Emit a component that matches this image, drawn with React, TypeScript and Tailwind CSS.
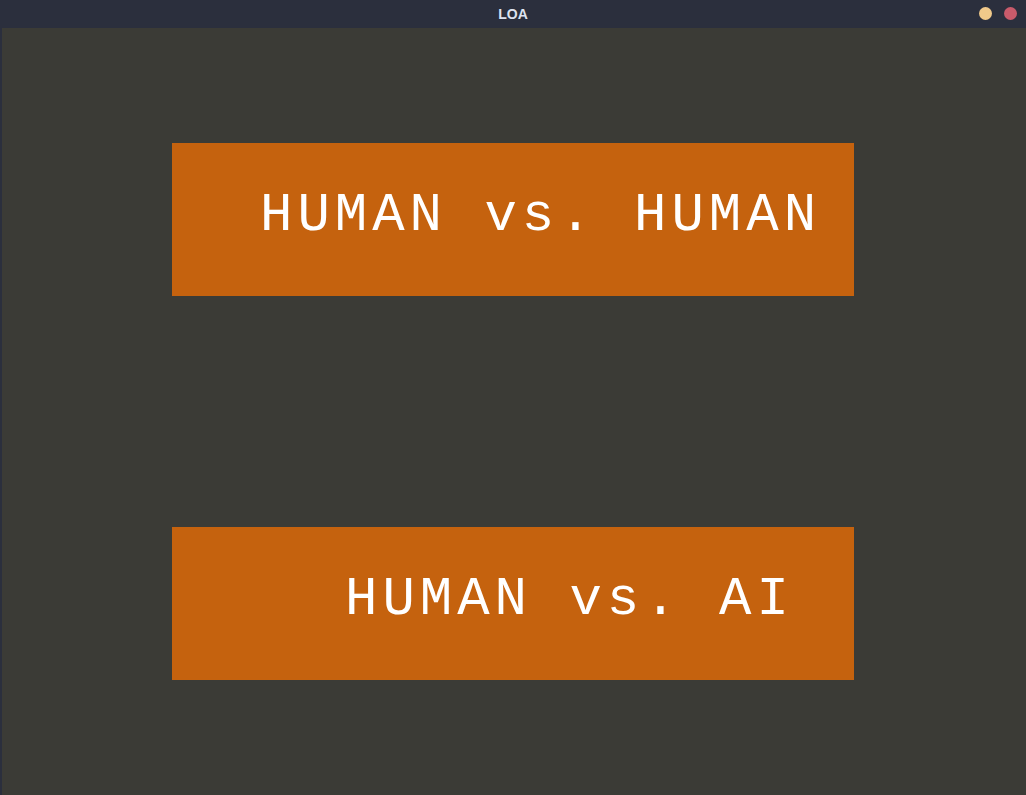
import React from "react";

export default function App() {
  return (
    <div className="w-[1026px] h-[795px] flex flex-col bg-[#3b3b36] overflow-hidden">
      <div className="h-[28px] shrink-0 bg-[#2b2f3d] relative flex items-center justify-center">
        <span className="text-[14px] font-bold text-[#dde3f0] font-['Liberation_Sans',sans-serif]">LOA</span>
        <div className="absolute right-[9px] top-[7px] flex gap-[12px]">
          <div className="w-[13px] h-[13px] rounded-full bg-[#f0c98a]" />
          <div className="w-[13px] h-[13px] rounded-full bg-[#c95b6b]" />
        </div>
      </div>
      <div className="flex flex-1">
        <div className="w-[2px] bg-[#2b2f3d]" />
        <div className="flex-1 flex flex-col pt-[115px] pl-[170px]">
          <div className="w-[682px] h-[153px] bg-[#c5620e] flex items-center pl-[88px] pb-[8px]">
            <span className="text-[54px] leading-none tracking-[5px] text-white font-['Liberation_Mono',monospace] whitespace-pre">HUMAN vs. HUMAN</span>
          </div>
          <div className="w-[682px] h-[153px] mt-[231px] bg-[#c5620e] flex items-center pl-[173px] pb-[8px]">
            <span className="text-[54px] leading-none tracking-[5px] text-white font-['Liberation_Mono',monospace] whitespace-pre">HUMAN vs. AI</span>
          </div>
        </div>
      </div>
    </div>
  );
}
